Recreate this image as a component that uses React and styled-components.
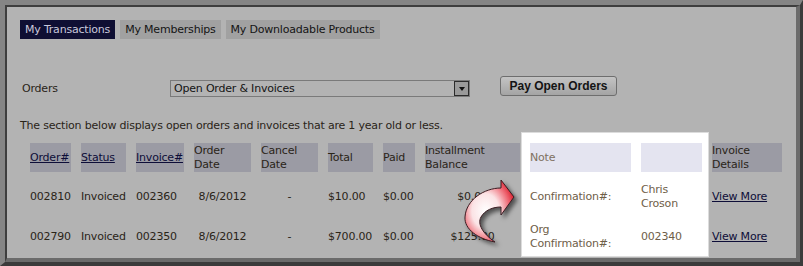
import React from 'react';
import styled, { createGlobalStyle } from 'styled-components';

const GlobalStyle = createGlobalStyle`
  html, body { margin: 0; padding: 0; background: #3b3b3b; }
  body { font-family: 'DejaVu Sans', Verdana, sans-serif; }
`;

const Frame = styled.div`
  width: 803px;
  height: 266px;
  box-sizing: border-box;
  border-top: 5px solid #858585;
  border-left: 5px solid #858585;
  border-right: 3px solid #3b3b3b;
  border-bottom: 4px solid #3b3b3b;
`;

const Inner = styled.div`
  position: relative;
  height: 100%;
  box-sizing: border-box;
  border-top: 2px solid #3e3e3e;
  border-left: 2px solid #3e3e3e;
  border-right: 4px solid #6b6b6b;
  border-bottom: 4px solid #6b6b6b;
  background: #b3b3b3;
  padding: 13px 0 0 13px;
  font-size: 11px;
  letter-spacing: -0.2px;
  color: #2a2418;
  overflow: hidden;
`;

const Tabs = styled.div`
  display: flex;
  gap: 5px;
`;

const Tab = styled.div`
  height: 19px;
  line-height: 19px;
  padding: 0 5px;
  background: ${p => (p.$active ? '#0f0f33' : '#a1a1a1')};
  color: ${p => (p.$active ? '#c9c9dc' : '#141414')};
`;

const FilterRow = styled.div`
  display: flex;
  align-items: flex-end;
  height: 21px;
  margin-top: 37px;
`;

const Label = styled.div`
  width: 150px;
  padding-left: 2px;
  padding-bottom: 1px;
  box-sizing: border-box;
  line-height: 14px;
`;

const SelectBox = styled.div`
  width: 300px;
  height: 17px;
  box-sizing: border-box;
  border: 1px solid #7a7a7a;
  display: flex;
  align-items: center;
  justify-content: space-between;
  padding-left: 3px;
  color: #141414;
`;

const ArrowBtn = styled.div`
  width: 15px;
  height: 15px;
  box-sizing: border-box;
  border: 1px solid #2b2b2b;
  background: #9a9a9a;
  display: flex;
  align-items: center;
  justify-content: center;
  &::after {
    content: '';
    border-left: 3.5px solid transparent;
    border-right: 3.5px solid transparent;
    border-top: 4px solid #111;
  }
`;

const PayButton = styled.button`
  align-self: flex-start;
  margin-left: 30px;
  width: 117px;
  height: 20px;
  border: 1px solid #6e6e6e;
  border-radius: 3px;
  background: linear-gradient(#c4c4c4, #a4a4a4);
  font-family: 'Liberation Sans', Arial, sans-serif;
  font-weight: bold;
  font-size: 12px;
  color: #141414;
  padding: 0;
`;

const Note = styled.div`
  margin-top: 22px;
  line-height: 14px;
`;

const Spotlight = styled.div`
  position: absolute;
  left: 514px;
  top: 125px;
  width: 188px;
  height: 125px;
  box-sizing: border-box;
  background: #fff;
  border: 1px solid #dcdcdc;
`;

const Table = styled.table`
  position: relative;
  z-index: 1;
  table-layout: fixed;
  border-collapse: separate;
  border-spacing: 10px;
  font-size: 11px;
`;

const Th = styled.th`
  width: ${p => p.$w}px;
  height: 29px;
  padding: 0;
  text-align: left;
  font-weight: normal;
  vertical-align: middle;
  line-height: 14px;
  background: ${p => (p.$lit ? '#e4e4f0' : '#9b9ba4')};
  color: ${p => (p.$lit ? '#7f7060' : '#2a2418')};
`;

const Td = styled.td`
  height: 30px;
  padding: 0;
  line-height: 14px;
  vertical-align: middle;
  text-align: ${p => p.$align || 'left'};
  color: ${p => (p.$lit ? '#6e5e48' : '#2a2418')};
`;

const Link = styled.a`
  color: #0d0d38;
  text-decoration: underline;
`;

const CurveArrow = styled.svg`
  position: absolute;
  left: 455px;
  top: 171px;
  z-index: 2;
  filter: drop-shadow(3px 3px 2px rgba(0, 0, 0, 0.55));
`;

const columns = [
  { key: 'order', label: 'Order#', w: 41, link: true },
  { key: 'status', label: 'Status', w: 45, link: true },
  { key: 'invoice', label: 'Invoice#', w: 48, link: true },
  { key: 'odate', label: 'Order Date', w: 57, align: 'center' },
  { key: 'cdate', label: 'Cancel Date', w: 57, align: 'center' },
  { key: 'total', label: 'Total', w: 45 },
  { key: 'paid', label: 'Paid', w: 32 },
  { key: 'inst', label: 'Installment Balance', w: 95, align: 'center' },
  { key: 'note', label: 'Note', w: 101, lit: true },
  { key: 'by', label: '', w: 61, lit: true },
  { key: 'details', label: 'Invoice Details', w: 70 },
];

const rows = [
  { order: '002810', status: 'Invoiced', invoice: '002360', odate: '8/6/2012', cdate: '-', total: '$10.00', paid: '$0.00', inst: '$0.00', note: 'Confirmation#:', by: 'Chris Croson' },
  { order: '002790', status: 'Invoiced', invoice: '002350', odate: '8/6/2012', cdate: '-', total: '$700.00', paid: '$0.00', inst: '$125.00', note: 'Org Confirmation#:', by: '002340' },
];

const App = () => (
  <>
    <GlobalStyle />
    <Frame>
      <Inner>
        <Tabs>
          <Tab $active>My Transactions</Tab>
          <Tab>My Memberships</Tab>
          <Tab>My Downloadable Products</Tab>
        </Tabs>
        <FilterRow>
          <Label>Orders</Label>
          <SelectBox>
            Open Order &amp; Invoices
            <ArrowBtn />
          </SelectBox>
          <PayButton>Pay Open Orders</PayButton>
        </FilterRow>
        <Note>The section below displays open orders and invoices that are 1 year old or less.</Note>
        <Spotlight />
        <Table>
          <thead>
            <tr>
              {columns.map(c => (
                <Th key={c.key} $w={c.w} $lit={c.lit}>
                  {c.link ? <Link>{c.label}</Link> : c.label}
                </Th>
              ))}
            </tr>
          </thead>
          <tbody>
            {rows.map(r => (
              <tr key={r.order}>
                {columns.map(c => (
                  <Td key={c.key} $align={c.align} $lit={c.lit}>
                    {c.key === 'details' ? <Link>View More</Link> : r[c.key]}
                  </Td>
                ))}
              </tr>
            ))}
          </tbody>
        </Table>
        <CurveArrow width="60" height="68" viewBox="0 0 60 68">
          <defs>
            <radialGradient id="arrowFill" cx="0.42" cy="0.5" r="0.62">
              <stop offset="0" stopColor="#ffffff" />
              <stop offset="0.45" stopColor="#fbe3e5" />
              <stop offset="0.8" stopColor="#ee6470" />
              <stop offset="1" stopColor="#d9202e" />
            </radialGradient>
          </defs>
          <path
            d="M52 19 L39 2 L39 10 C22 10 4 22 3 39 C2 51 16 61 33 64 C21 56 15 46 19 39 C23 32 31 29 39 29 L39 37 Z"
            fill="url(#arrowFill)"
            stroke="#3b1c22"
            strokeWidth="1"
          />
        </CurveArrow>
      </Inner>
    </Frame>
  </>
);

export default App;
